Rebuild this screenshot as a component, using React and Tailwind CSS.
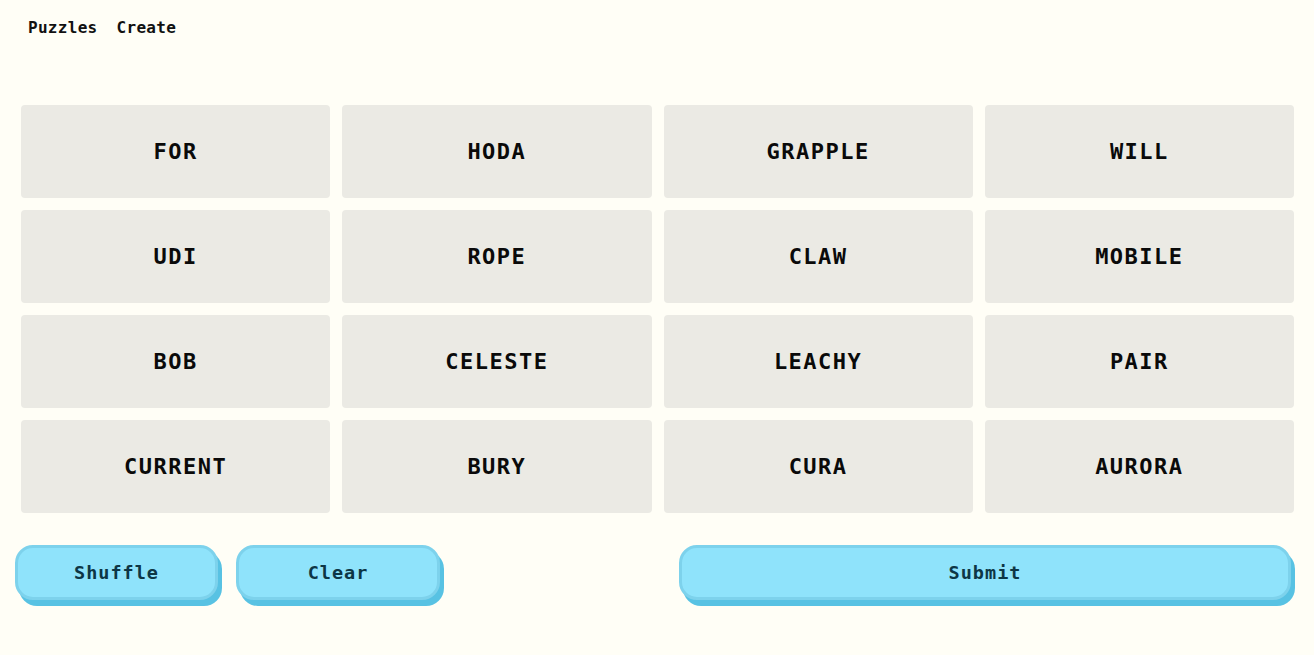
const words = [
  'FOR', 'HODA', 'GRAPPLE', 'WILL',
  'UDI', 'ROPE', 'CLAW', 'MOBILE',
  'BOB', 'CELESTE', 'LEACHY', 'PAIR',
  'CURRENT', 'BURY', 'CURA', 'AURORA',
];

const mono = { fontFamily: '"DejaVu Sans Mono", "Liberation Mono", monospace' };

const Btn = ({ children, className = '' }) => (
  <button
    className={`h-[55px] rounded-[18px] border-[3px] border-[#7dd2ec] bg-[#8fe3fb] text-[#0d3645] text-[18.5px] font-bold tracking-[1px] shadow-[4px_6px_0_#58c2e3] ${className}`}
    style={mono}
  >
    {children}
  </button>
);

export default function App() {
  return (
    <div className="min-h-screen w-full bg-[#fffef6] text-[#111]" style={mono}>
      <nav className="flex gap-[19px] px-[28px] pt-[16px] text-[16px] font-bold tracking-[0.3px]">
        <a className="cursor-pointer">Puzzles</a>
        <a className="cursor-pointer">Create</a>
      </nav>
      <div className="grid grid-cols-4 gap-3 pl-[21px] pr-[20px] mt-[65px]">
        {words.map((w) => (
          <div
            key={w}
            className="h-[93px] rounded-[4px] bg-[#ebeae4] flex items-center justify-center text-[22px] font-bold tracking-[1.5px] text-[#0a0a0a]"
          >
            {w}
          </div>
        ))}
      </div>
      <div className="flex items-start pl-[15px] pr-[23px] mt-[32px]">
        <div className="flex gap-[18px]">
          <Btn className="w-[203px]">Shuffle</Btn>
          <Btn className="w-[204px]">Clear</Btn>
        </div>
        <Btn className="ml-auto w-[612px]">Submit</Btn>
      </div>
    </div>
  );
}
